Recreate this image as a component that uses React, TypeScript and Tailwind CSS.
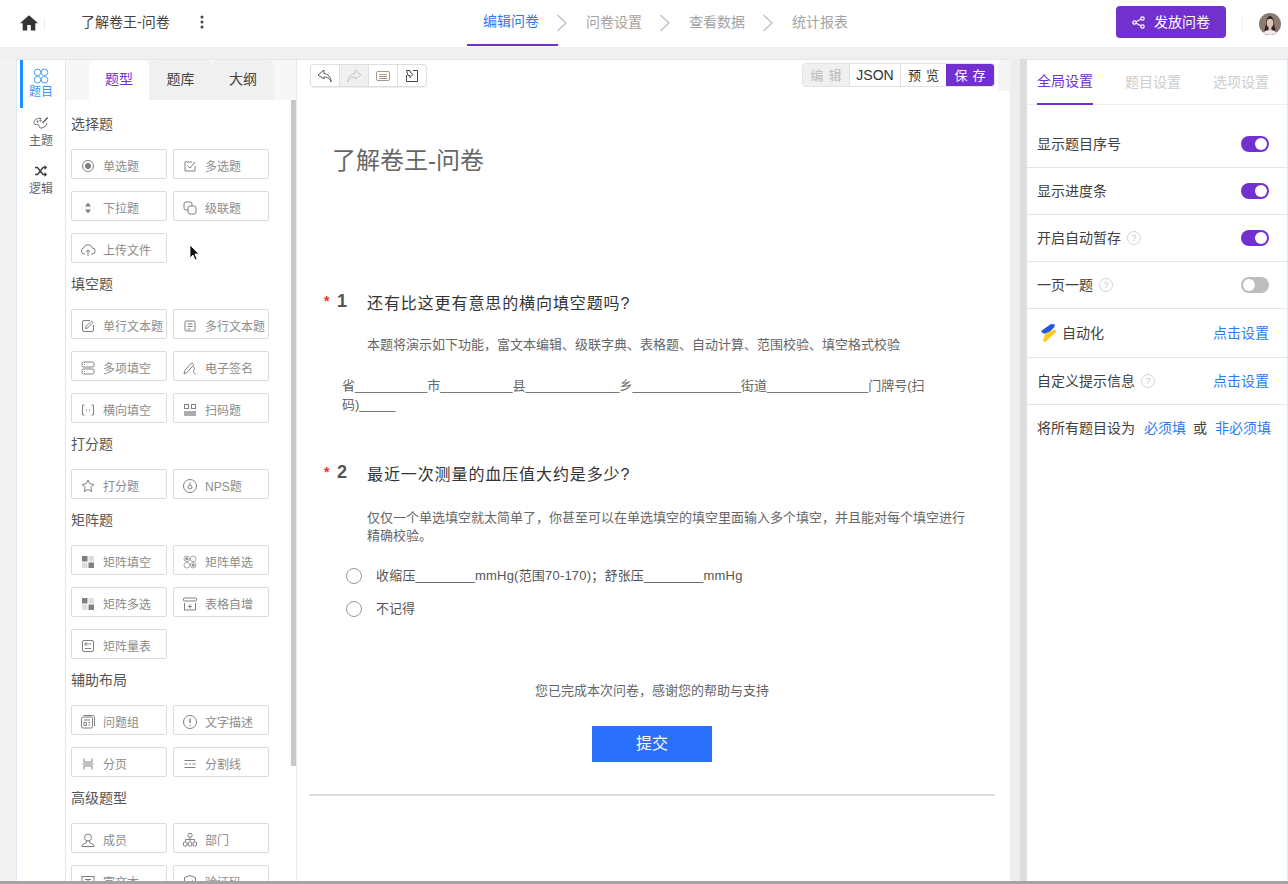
import React from "react";

const S = ({ children, size = 16, className = "", strokeWidth = 1 }: { children: React.ReactNode; size?: number; className?: string; strokeWidth?: number }) => (
  <svg width={size} height={size} viewBox="0 0 16 16" fill="none" stroke="currentColor" strokeWidth={strokeWidth} className={className}>
    {children}
  </svg>
);

const icons: Record<string, React.ReactNode> = {
  radio: <S><circle cx="8" cy="8" r="5.5" /><circle cx="8" cy="8" r="2.6" fill="currentColor" /></S>,
  check: <S><path d="M13 8v5H3V4h7" /><path d="M5.5 7.5 8 10l5-6" /></S>,
  drop: <S><path d="M8 2.5 11 6.5H5zM8 13.5 5 9.5h6z" fill="currentColor" stroke="none" /></S>,
  cascade: <S><path d="M6 10H4a2 2 0 0 1-2-2V4a2 2 0 0 1 2-2h4a2 2 0 0 1 2 2v2" /><rect x="6" y="6" width="8" height="8" rx="2" /></S>,
  upload: <S><path d="M5 12H4a3 3 0 0 1-.4-5.9A4.5 4.5 0 0 1 12.3 6 3 3 0 0 1 12 12h-1" /><path d="M8 14V8M5.8 10 8 7.8 10.2 10" /></S>,
  edit: <S><path d="M13.5 7v5a1.500 1.500 0 0 1-1.500 1.500H4A1.500 1.500 0 0 1 2.500 12V4A1.500 1.500 0 0 1 4 2.500h6" /><path d="m5.500 10.500.4-2L11.500 3 13 4.500 7.500 10.100z" /></S>,
  lines: <S><rect x="3" y="3" width="10" height="10" rx="1" /><path d="M5.500 6h5M5.500 8.500h5M5.500 11h3" /></S>,
  multi: <S><rect x="2" y="2" width="12" height="5" rx="1.500" /><rect x="2" y="9" width="12" height="5" rx="1.500" /><path d="M4.500 4v1M4.500 11v1" /></S>,
  sign: <S><path d="m2 14 .8-3.500L9 3.500a1.500 1.500 0 0 1 2.200 2L5 12.500zM11 6c1 1 2 2 1 4-.6 1.500-1 3 1.800 4" /></S>,
  blank: <S><path d="M4.500 3H2.500v10h2M11.500 3h2v10h-2M6 8h1M9 8h1" /></S>,
  scan: (
    <S>
      <rect x="2.500" y="2.500" width="4" height="4" />
      <rect x="9.500" y="2.500" width="4" height="4" />
      <path d="M3 9v5M5 9v5M7 9v5M9 9v5M11 9v5M13 9v5" strokeWidth={1.300} />
    </S>
  ),
  star: <S><path d="m8 2 1.800 3.900 4.200.5-3.100 2.900.8 4.200L8 11.400l-3.700 2.100.8-4.200L2 6.400l4.200-.5z" /></S>,
  nps: <S><circle cx="8" cy="8" r="6.500" /><circle cx="8" cy="9" r="2" /><path d="M8 4.500v2" /></S>,
  matFill: (
    <S>
      <rect x="2" y="2" width="5.500" height="5.500" fill="currentColor" stroke="none" />
      <rect x="8.500" y="2" width="5.500" height="5.500" fill="#ddd" stroke="none" />
      <rect x="2" y="8.500" width="5.500" height="5.500" fill="#ddd" stroke="none" />
      <rect x="8.500" y="8.500" width="5.500" height="5.500" fill="currentColor" stroke="none" />
    </S>
  ),
  matRadio: (
    <S strokeWidth={0.7}>
      <circle cx="4.800" cy="4.800" r="2.800" /><circle cx="4.800" cy="4.800" r="1.100" fill="currentColor" />
      <circle cx="11.200" cy="4.800" r="2.800" />
      <circle cx="4.800" cy="11.200" r="2.800" />
      <circle cx="11.200" cy="11.200" r="2.800" /><circle cx="11.200" cy="11.200" r="1.100" fill="currentColor" />
    </S>
  ),
  matCheck: (
    <S>
      <rect x="2" y="2" width="5.500" height="5.500" fill="currentColor" stroke="none" />
      <rect x="8.500" y="2" width="5.500" height="5.500" fill="#ddd" stroke="none" />
      <rect x="2" y="8.500" width="5.500" height="5.500" fill="#ddd" stroke="none" />
      <rect x="8.500" y="8.500" width="5.500" height="5.500" fill="currentColor" stroke="none" />
    </S>
  ),
  tableAdd: <S><rect x="1.500" y="2" width="13" height="3" rx="1" /><path d="M2.500 7v7h11V7M8 8.500v4M6 10.500h4" /></S>,
  scale: <S><rect x="2.500" y="2.500" width="11" height="11" rx="1.500" /><circle cx="6" cy="6" r="1.200" /><path d="M8.500 6H11M5 10.500h6" /></S>,
  group: <S><rect x="1.500" y="3" width="11" height="11" rx="1.500" /><path d="M3.500 1.500h9a2 2 0 0 1 2 2V12M4 6h6M4 8.500h2.500v3H4zM8.500 8.500H10M8.500 11H10" /></S>,
  info: <S><circle cx="8" cy="8" r="6.500" /><path d="M8 4.500v4.500M8 10.800v1" strokeWidth={1.400} /></S>,
  page: <S><path d="M4 2.500v3.500h8V2.500M4 13.500V10h8v3.500M2.500 8h11" /></S>,
  divider: <S><path d="M2.500 4.500h11M2.500 8h3M7 8h2M10.500 8h3M2.500 11.500h11" strokeWidth={1.200} /></S>,
  user: <S><circle cx="8" cy="5.500" r="3.500" /><path d="M6.500 9v1.500L2 13v1.500h12V13l-4.500-2.500V9" /></S>,
  dept: <S><rect x="6" y="1.500" width="4" height="3.500" rx="1" /><path d="M3.500 9.500V7.500h9v2M8 5v4" /><rect x="1.500" y="10" width="3.500" height="4" rx="1" /><rect x="6.250" y="10" width="3.500" height="4" rx="1" /><rect x="11" y="10" width="3.500" height="4" rx="1" /></S>,
  rich: <S><rect x="2" y="2.500" width="12" height="11" /><path d="M5 5.500h6M8 5.500v6" /></S>,
  code: <S><path d="M8 1.500 13.500 3.500v5c0 3-2.500 5-5.500 6-3-1-5.500-3-5.500-6v-5z" /><path d="m5.500 8 2 2 3-3.500" /></S>,
};

const Item = ({ icon, label }: { icon: string; label: string }) => (
  <div className="flex h-[30px] w-[96px] items-center rounded-[2px] border border-[#dcdcdc] bg-white pl-[8px] pt-[4px] text-[12px] text-[#8c8c8c]">
    <span className="flex w-[16px] shrink-0 items-center justify-center text-[#808080]">{icons[icon]}</span>
    <span className="ml-[7px] whitespace-nowrap pt-[2px]">{label}</span>
  </div>
);

const Group = ({ title, items }: { title: string; items: [string, string][] }) => (
  <div>
    <div className="mb-[16px] h-[18px] text-[14px] leading-[18px] text-[#555]">{title}</div>
    <div className="flex w-[202px] flex-wrap gap-x-[6px] gap-y-[12px]">
      {items.map(([i, l]) => (
        <Item key={l} icon={i} label={l} />
      ))}
    </div>
  </div>
);

const Toggle = ({ on = true }: { on?: boolean }) => (
  <span className={`flex h-[16px] w-[28px] items-center rounded-full px-[2px] ${on ? "justify-end bg-[#7230cf]" : "justify-start bg-[#bdbdbd]"}`}>
    <span className="h-[12px] w-[12px] rounded-full bg-white" />
  </span>
);

const Help = () => (
  <span className="ml-[6px] flex h-[14px] w-[14px] items-center justify-center rounded-full border border-[#d5d5d5] text-[9px] leading-none text-[#c4c4c4]">?</span>
);

const Row = ({ h, children, last }: { h: string; children: React.ReactNode; last?: boolean }) => (
  <div className={`flex items-center justify-between pl-[10px] pr-[18px] text-[14px] text-[#404040] ${h} ${last ? "" : "border-b border-[#dfe5ec]"}`}>
    {children}
  </div>
);

const Chevron = ({ className }: { className: string }) => (
  <svg width="10" height="18" viewBox="0 0 10 18" fill="none" stroke="#bdbdbd" strokeWidth={1.200} className={className}>
    <path d="m.5 1 8.500 8-8.500 8" />
  </svg>
);

const Mark = ({ n, text }: { n: string; text: string }) => (
  <div className="flex items-center">
    <span className="-mt-[6px] w-[28px] pl-[15px] text-[14px] font-bold leading-[18px] text-[#e8332a]">*</span>
    <span className="-mt-[6px] w-[30px] text-[18px] font-bold leading-[20px] text-[#555]">{n}</span>
    <span className="text-[16px] leading-[20px] tracking-[0.9px] text-[#333]">{text}</span>
  </div>
);

export default function App() {
  return (
    <div className="relative flex h-[884px] w-[1288px] flex-col overflow-hidden bg-[#f0f0f0] font-['Liberation_Sans','Noto_Sans_CJK_SC',sans-serif]">
      {/* header */}
      <header className="flex h-[47px] shrink-0 items-center bg-white pl-[20px] pr-[6px]">
        <svg width="18" height="18" viewBox="2 3 20 17.500" fill="#333" className="-mt-[2px]">
          <path d="M10 20v-6h4v6h5v-8h3L12 3 2 12h3v8z" />
        </svg>
        <span className="ml-[6px] h-[12px] w-px bg-[#eee]" />
        <span className="-mt-[2px] ml-[36px] w-[89px] whitespace-nowrap text-[14px] text-[#444]">了解卷王-问卷</span>
        <svg width="4" height="14" viewBox="0 0 4 14" fill="#444" className="-mt-[3px] ml-[30px]">
          <circle cx="2" cy="2" r="1.500" />
          <circle cx="2" cy="7" r="1.500" />
          <circle cx="2" cy="12" r="1.500" />
        </svg>
        <nav className="ml-[263px] flex h-[46px] items-center self-start whitespace-nowrap text-[14px] text-[#a3a3a3]">
          <span className="flex h-full w-[91px] items-center justify-center border-b-2 border-[#7230cf] pb-[1px] pr-[3px] text-[#2d7bf4]">编辑问卷</span>
          <Chevron className="-ml-[1px] mr-[19px]" />
          <span className="-mt-[2px]">问卷设置</span>
          <Chevron className="ml-[18px] mr-[19px]" />
          <span className="-mt-[2px]">查看数据</span>
          <Chevron className="ml-[18px] mr-[19px]" />
          <span className="-mt-[2px]">统计报表</span>
        </nav>
        <button className="-mt-[3px] ml-[268px] flex h-[32px] w-[110px] items-center justify-center rounded-[4px] bg-[#7230cf] text-[14px] text-white">
          <svg width="13" height="13" viewBox="0 0 13 13" fill="none" stroke="white" strokeWidth={1.200} className="mr-[9px]">
            <circle cx="2.500" cy="6.500" r="1.700" />
            <circle cx="10.500" cy="2.500" r="1.700" />
            <circle cx="10.500" cy="10.500" r="1.700" />
            <path d="m4 5.700 5-2.500M4 7.300l5 2.500" />
          </svg>
          发放问卷
        </button>
        <span className="ml-[16px] h-[14px] w-px bg-[#eee]" />
        <svg width="22" height="22" viewBox="0 0 22 22" className="ml-[16px] rounded-full">
          <rect width="22" height="22" fill="#8d7a72" />
          <path d="M5 22c0-5 1-7 2-11 0-5 2-8 4-8s4 3 4 8c1 4 2 6 2 11z" fill="#2e2522" />
          <ellipse cx="11" cy="10" rx="3.400" ry="4.300" fill="#e2c2b2" />
          <path d="M3 22c1-4 5-5 8-5s7 1 8 5z" fill="#f4e9e6" />
          <path d="M9.500 13h3v4.500h-3z" fill="#e2c2b2" />
        </svg>
      </header>

      {/* body */}
      <main className="mt-[12px] flex min-h-0 flex-1 border-b-[3px] border-[#a4a4a4] bg-[#f3f3f3] pl-[16px]">
        {/* rail */}
        <aside className="flex w-[50px] shrink-0 flex-col border-x border-t border-[#dde8f2] bg-white pl-[3px]">
          <div className="flex h-[48px] w-[42px] flex-col items-center justify-center border-l-[3px] border-[#1e90ff] pr-[3px] text-[12px] leading-[16px] text-[#3a96f5]">
            <svg width="16" height="16" viewBox="0 0 16 16" fill="none" stroke="currentColor" strokeWidth={0.9}>
              <circle cx="4.500" cy="4.300" r="3.300" />
              <circle cx="11.500" cy="4.300" r="3.300" />
              <circle cx="4.500" cy="11.700" r="3.300" />
              <circle cx="11.500" cy="11.700" r="3.300" />
            </svg>
            题目
          </div>
          <div className="flex h-[48px] w-[42px] flex-col items-center justify-center gap-[2px] text-[12px] leading-[16px] text-[#666]">
            <svg width="16" height="16" viewBox="0 0 16 16" fill="none" stroke="currentColor" strokeWidth={1}>
              <path d="M8.500 3.500C4.500 2.800 1 4.500 1 7.500c0 2 1.800 2.300 3.300 2 1.500-.2 1.700.6 1.700 1.700 0 1.300 1 1.800 2.500 1.800 3 0 5-2.500 5.300-5" />
              <path d="M9.500 8 14.800 2.500" strokeWidth={1.600} />
              <circle cx="4.500" cy="6.500" r=".7" />
              <circle cx="7.500" cy="5.500" r=".7" />
            </svg>
            主题
          </div>
          <div className="flex h-[48px] w-[42px] flex-col items-center justify-center gap-[2px] text-[12px] leading-[16px] text-[#666]">
            <svg width="16" height="16" viewBox="-1 -1 16 16" fill="none" stroke="#444" strokeWidth={1.5}>
              <path d="M1 3.500h2.500L9 10.500h3M1 10.500h2.500L9 3.500h3" />
              <path d="m10.800 1.800 2 1.700-2 1.700zM10.800 8.800l2 1.700-2 1.700z" fill="#444" strokeWidth={0.8} />
            </svg>
            逻辑
          </div>
        </aside>

        {/* question type panel */}
        <section className="flex w-[231px] shrink-0 flex-col border-r border-t border-[#e3e8ee] bg-white">
          <div className="flex h-[40px] shrink-0 items-end bg-[#f7f7f7] pl-[23px] text-[14px] text-[#444]">
            <span className="flex h-[40px] w-[60px] items-center justify-center rounded-t-[6px] bg-white pb-[1px] text-[#7230cf]">题型</span>
            <span className="flex h-[40px] w-[63px] items-center justify-center rounded-t-[6px] bg-[#f0f0f0] pb-[1px]">题库</span>
            <span className="flex h-[40px] w-[62px] items-center justify-center rounded-t-[6px] bg-[#f0f0f0] pb-[1px]">大纲</span>
          </div>
          <div className="relative min-h-0 flex-1 overflow-hidden">
            <div className="flex flex-col gap-[12px] pl-[5px] pt-[15px]">
              <Group title="选择题" items={[["radio", "单选题"], ["check", "多选题"], ["drop", "下拉题"], ["cascade", "级联题"], ["upload", "上传文件"]]} />
              <Group title="填空题" items={[["edit", "单行文本题"], ["lines", "多行文本题"], ["multi", "多项填空"], ["sign", "电子签名"], ["blank", "横向填空"], ["scan", "扫码题"]]} />
              <Group title="打分题" items={[["star", "打分题"], ["nps", "NPS题"]]} />
              <Group title="矩阵题" items={[["matFill", "矩阵填空"], ["matRadio", "矩阵单选"], ["matCheck", "矩阵多选"], ["tableAdd", "表格自增"], ["scale", "矩阵量表"]]} />
              <Group title="辅助布局" items={[["group", "问题组"], ["info", "文字描述"], ["page", "分页"], ["divider", "分割线"]]} />
              <Group title="高级题型" items={[["user", "成员"], ["dept", "部门"], ["rich", "富文本"], ["code", "验证码"]]} />
            </div>
            <div className="absolute right-0 top-0 h-[666px] w-[5px] bg-[#c8c8c8]" />
          </div>
        </section>

        {/* canvas */}
        <section className="relative flex min-w-0 flex-1 flex-col border-t border-[#e3e8ee] bg-white pl-[12px] pr-[15px]">
          <div className="absolute right-0 top-0 h-[31px] w-[12px] rounded-tl-[6px] bg-[#f4f4f4]" />
          <div className="flex h-[28px] shrink-0 items-end justify-between pb-[1px]">
            <div className="ml-[1px] flex h-[23px] items-stretch overflow-hidden rounded-[4px] border border-[#dedede] shadow-[0_1px_0_#eee]">
              <span className="flex w-[29px] items-center justify-center border-r border-[#dedede]">
                <svg width="16" height="14" viewBox="0 0 16 14" fill="none" stroke="#555"><path d="M7 1 1 6l6 4V8c3 0 6 1 7 5 0-5-3-8-7-8.500z" /></svg>
              </span>
              <span className="flex w-[29px] items-center justify-center border-r border-[#dedede] bg-[#f0f0f0]">
                <svg width="16" height="14" viewBox="0 0 16 14" fill="none" stroke="#c4c4c4"><path d="M9 1l6 5-6 4V8c-3 0-6 1-7 5 0-5 3-8 7-8.500z" /></svg>
              </span>
              <span className="flex w-[29px] items-center justify-center border-r border-[#dedede]">
                <svg width="14" height="10" viewBox="0 0 14 10" fill="none" stroke="#999"><rect x=".5" y=".5" width="13" height="9" rx="1.500" /><path d="M3 3.500h8" stroke="#d8a060" /><path d="M3 5.500h8M3 7.500h8" /></svg>
              </span>
              <span className="flex w-[28px] items-center justify-center">
                <svg width="14" height="14" viewBox="0 0 14 14" fill="none" stroke="#444"><path d="M8 1.500h4.500v11h-11V6" /><path d="M1.500 1.500h3.500v1.500L8 5.500 5 8.500V6.500H3z" /></svg>
              </span>
            </div>
            <div className="flex h-[24px] overflow-hidden rounded-[4px] border border-[#e2e2e2] text-[13px] leading-none">
              <span className="flex w-[46px] items-center justify-center bg-[#f0f0f0] pl-[5px] tracking-[5px] text-[#bcbcbc]">编辑</span>
              <span className="flex w-[52px] items-center justify-center border-x border-[#e2e2e2] text-[14px] text-[#333]">JSON</span>
              <span className="flex w-[45px] items-center justify-center pl-[5px] tracking-[5px] text-[#333]">预览</span>
              <span className="flex w-[48px] items-center justify-center bg-[#7230cf] pl-[5px] tracking-[5px] text-white">保存</span>
            </div>
          </div>

          <article className="h-[708px] shrink-0 border-b-2 border-[#dcdcdc]">
            <h1 className="mt-[58px] pl-[23px] text-[24px] font-normal leading-[30px] text-[#666]">了解卷王-问卷</h1>

            <div className="mt-[118px]">
              <Mark n="1" text="还有比这更有意思的横向填空题吗?" />
            </div>
            <p className="mt-[22px] pl-[58px] text-[13px] leading-[18px] text-[#666]">
              本题将演示如下功能，富文本编辑、级联字典、表格题、自动计算、范围校验、填空格式校验
            </p>
            <p className="mt-[22px] w-[620px] pl-[33px] text-[13px] leading-[19px] text-[#666]">
              省__________市__________县_____________乡_______________街道______________门牌号(扫码)_____
            </p>

            <div className="mt-[51px]">
              <Mark n="2" text="最近一次测量的血压值大约是多少?" />
            </div>
            <p className="mt-[24px] w-[660px] pl-[58px] text-[13px] leading-[18px] text-[#666]">
              仅仅一个单选填空就太简单了，你甚至可以在单选填空的填空里面输入多个填空，并且能对每个填空进行精确校验。
            </p>
            <div className="mt-[14px] flex h-[33px] items-center pl-[37px] text-[13px] tracking-[0.2px] text-[#555]">
              <span className="mr-[14px] h-[16px] w-[16px] rounded-full border border-[#999]" />
              收缩压________mmHg(范围70-170)；舒张压________mmHg
            </div>
            <div className="flex h-[33px] items-center pl-[37px] text-[13px] text-[#555]">
              <span className="mr-[14px] h-[16px] w-[16px] rounded-full border border-[#999]" />
              不记得
            </div>
            <p className="mt-[57px] text-center text-[13px] leading-[18px] text-[#666]">您已完成本次问卷，感谢您的帮助与支持</p>
            <div className="mt-[26px] flex justify-center">
              <button className="h-[36px] w-[120px] bg-[#2a70fb] text-[16px] text-white">提交</button>
            </div>
          </article>
        </section>

        {/* panel shadow */}
        <div className="w-[10px] shrink-0 bg-[#eeeeee]" />
        <div className="w-[7px] shrink-0 bg-[#dddddd]" />

        {/* settings */}
        <aside className="flex w-[261px] shrink-0 flex-col border-r border-t border-[#e4e8ee] bg-white">
          <div className="flex h-[45px] shrink-0 gap-[32px] border-b border-[#eee] pl-[10px] text-[14px] text-[#cdcdcd]">
            <span className="flex h-[45px] items-center border-b-2 border-[#7230cf] text-[#7230cf]">全局设置</span>
            <span className="flex h-[44px] items-center">题目设置</span>
            <span className="flex h-[44px] items-center">选项设置</span>
          </div>
          <Row h="h-[63px] pt-[16px]"><span>显示题目序号</span><Toggle /></Row>
          <Row h="h-[47px]"><span>显示进度条</span><Toggle /></Row>
          <Row h="h-[47px]"><span className="flex items-center">开启自动暂存<Help /></span><Toggle /></Row>
          <Row h="h-[47px]"><span className="flex items-center">一页一题<Help /></span><Toggle on={false} /></Row>
          <Row h="h-[49px]">
            <span className="flex items-center">
              <svg width="18" height="20" viewBox="0 0 18 20" className="ml-[3px] mr-[4px]">
                <path d="M1 8 11 1l4 .5-1 3-6 6-5 0z" fill="#2457e6" />
                <path d="M5 10.500 13 7c2-.8 4 .5 3 2L6 18.500c-1.200.8-3 .5-2.800-1z" fill="#ffc927" />
              </svg>
              自动化
            </span>
            <span className="text-[#2d7bf4]">点击设置</span>
          </Row>
          <Row h="h-[47px]"><span className="flex items-center">自定义提示信息<Help /></span><span className="text-[#2d7bf4]">点击设置</span></Row>
          <Row h="h-[46px]" last>
            <span className="flex w-full items-center whitespace-nowrap">
              将所有题目设为
              <span className="ml-[9px] text-[#2d7bf4]">必须填</span>
              <span className="ml-[7px]">或</span>
              <span className="ml-[8px] text-[#2d7bf4]">非必须填</span>
            </span>
          </Row>
        </aside>
      </main>

      {/* cursor */}
      <svg width="12" height="18" viewBox="0 0 12 18" className="absolute left-[189px] top-[244px]">
        <path d="M1 1v13l3-3 2 5 2-1-2-5h4z" fill="#111" stroke="#fff" strokeWidth={0.8} />
      </svg>
    </div>
  );
}
